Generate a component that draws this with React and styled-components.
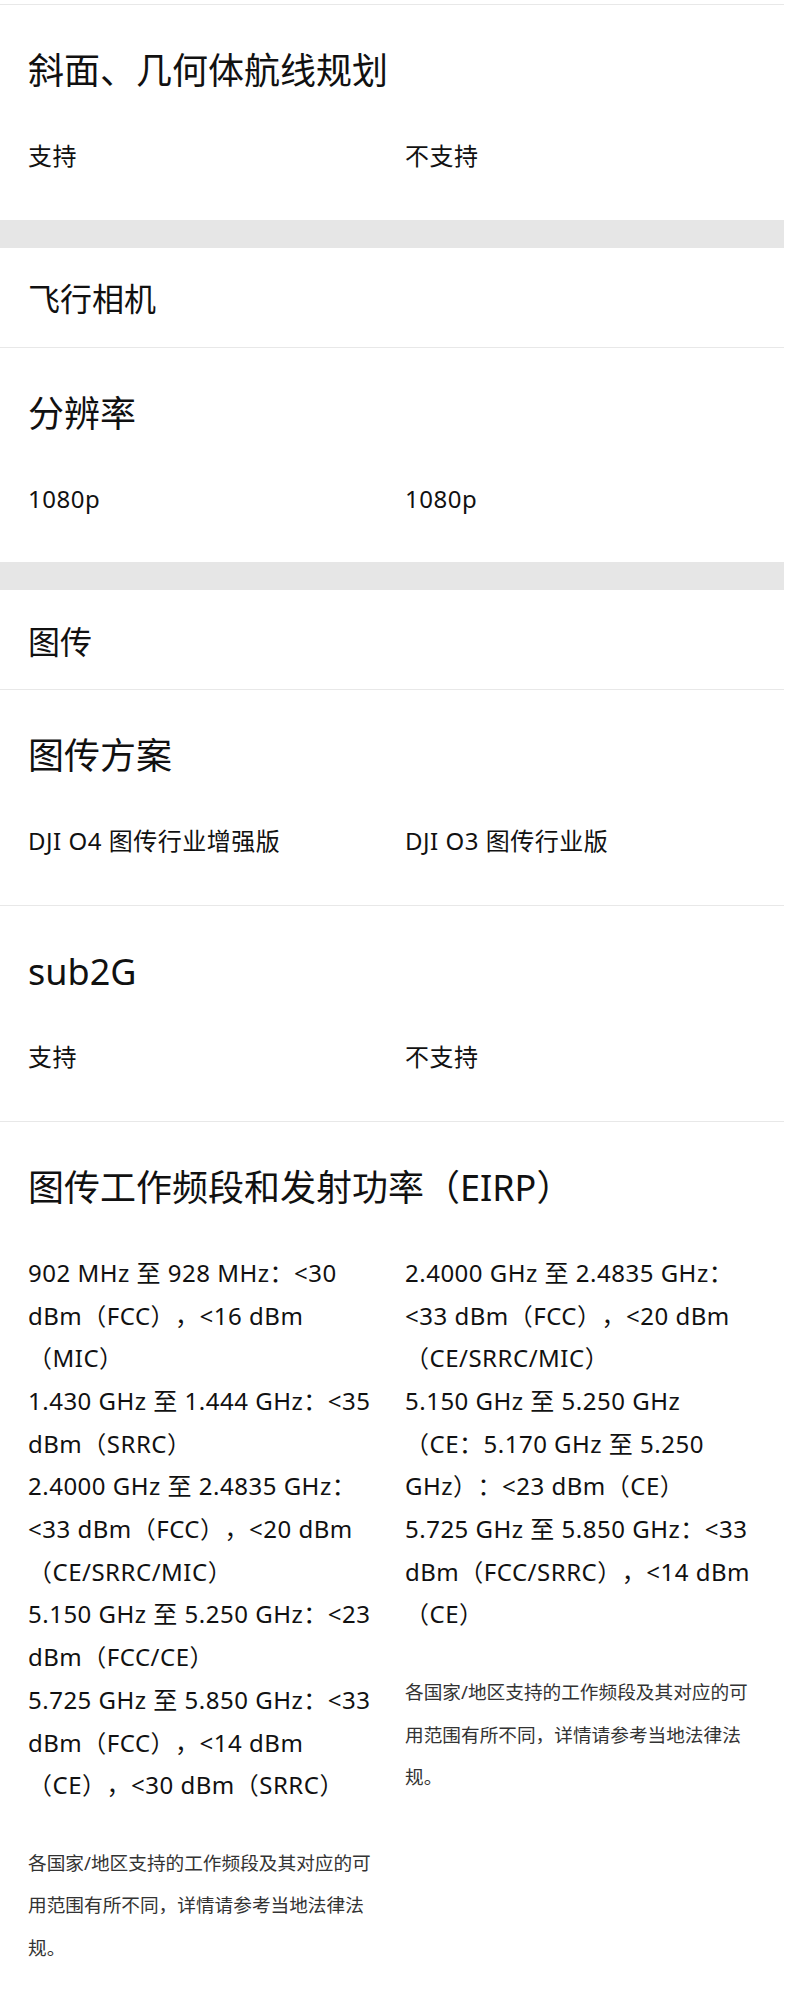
import styled, { createGlobalStyle } from "styled-components";

const GlobalStyle = createGlobalStyle`
    body {
        margin: 0;
        background: #fff;
    }
`;

const Page = styled.div`
    width: 784px;
    padding-top: 4px;
    font-family: "Noto Sans", "Noto Sans CJK SC", sans-serif;
    color: #111;
    text-spacing-trim: space-all;
    box-sizing: border-box;
`;

const Item = styled.div`
    padding: 44px 28px 42px;
    border-top: ${props => props.first ? "1px solid #e8e8e8" : "none"};
    border-bottom: ${props => props.last ? "none" : "1px solid #e8e8e8"};
`;

const Title = styled.h3`
    margin: 0;
    font-size: 36px;
    line-height: 44px;
    font-weight: 400;
`;

const Values = styled.div`
    display: grid;
    grid-template-columns: 350px 350px;
    column-gap: 27px;
    margin-top: 42px;
`;

const Cell = styled.div`
    font-size: 24px;
    line-height: 42.7px;
    letter-spacing: 0.5px;
`;

const Line = styled.p`
    margin: 0;
`;

const Note = styled.p`
    margin: 35px 0 0;
    font-size: 18.67px;
    line-height: 42.5px;
    letter-spacing: 0;
    color: #333;
`;

const Band = styled.div`
    height: 28px;
    background: #e6e6e6;
`;

const SectionHeader = styled.h2`
    margin: 0;
    height: 99px;
    padding: 0 28px;
    display: flex;
    align-items: center;
    font-size: 32px;
    font-weight: 400;
    border-bottom: 1px solid #e8e8e8;
`;

const note = "各国家/地区支持的工作频段及其对应的可用范围有所不同，详情请参考当地法律法规。";

const eirpLeft = [
    "902 MHz 至 928 MHz：<30 dBm（FCC），<16 dBm（MIC）",
    "1.430 GHz 至 1.444 GHz：<35 dBm（SRRC）",
    "2.4000 GHz 至 2.4835 GHz：<33 dBm（FCC），<20 dBm（CE/SRRC/MIC）",
    "5.150 GHz 至 5.250 GHz：<23 dBm（FCC/CE）",
    "5.725 GHz 至 5.850 GHz：<33 dBm（FCC），<14 dBm（CE），<30 dBm（SRRC）"
];

const eirpRight = [
    "2.4000 GHz 至 2.4835 GHz：<33 dBm（FCC），<20 dBm（CE/SRRC/MIC）",
    "5.150 GHz 至 5.250 GHz（CE：5.170 GHz 至 5.250 GHz）：<23 dBm（CE）",
    "5.725 GHz 至 5.850 GHz：<33 dBm（FCC/SRRC），<14 dBm（CE）"
];

function SpecItem({ title, left, right, first, last, withNote }) {
    return (
        <Item first={first} last={last}>
            <Title>{title}</Title>
            <Values>
                <Cell>
                    {left.map((l, i) => <Line key={`l-${i}`}>{l}</Line>)}
                    {withNote && <Note>{note}</Note>}
                </Cell>
                <Cell>
                    {right.map((l, i) => <Line key={`r-${i}`}>{l}</Line>)}
                    {withNote && <Note>{note}</Note>}
                </Cell>
            </Values>
        </Item>
    );
}

export default function App() {
    return (
        <Page>
            <GlobalStyle />
            <SpecItem first last title="斜面、几何体航线规划" left={["支持"]} right={["不支持"]} />
            <Band />
            <SectionHeader>飞行相机</SectionHeader>
            <SpecItem last title="分辨率" left={["1080p"]} right={["1080p"]} />
            <Band />
            <SectionHeader>图传</SectionHeader>
            <SpecItem title="图传方案" left={["DJI O4 图传行业增强版"]} right={["DJI O3 图传行业版"]} />
            <SpecItem title="sub2G" left={["支持"]} right={["不支持"]} />
            <SpecItem last withNote title="图传工作频段和发射功率（EIRP）" left={eirpLeft} right={eirpRight} />
        </Page>
    );
}
